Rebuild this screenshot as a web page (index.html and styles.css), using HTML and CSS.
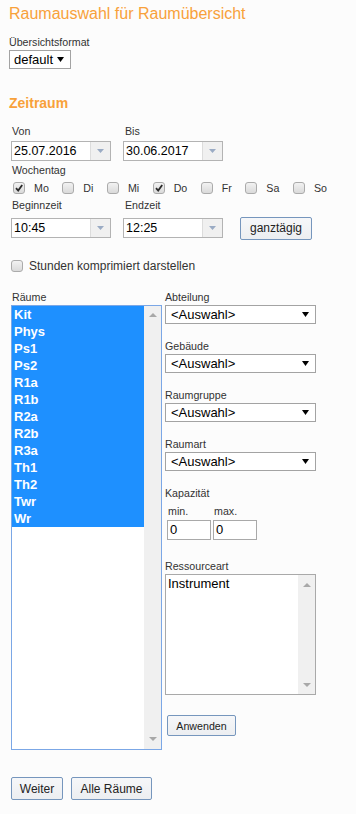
FILE: index.html
```html
<!DOCTYPE html>
<html lang="de">
<head>
  <meta charset="UTF-8" />
  <meta name="viewport" content="width=device-width, initial-scale=1" />
  <title>Raumauswahl für Raumübersicht</title>
  <link rel="stylesheet" href="styles.css">
</head>
<body>

<h1>Raumauswahl für Raumübersicht</h1>

<div class="format">
  <label class="lbl">Übersichtsformat</label>
  <div class="select select-format">
    <span>default</span>
    <svg class="caret" width="7" height="5" viewBox="0 0 7 5"><polygon points="0,0 7,0 3.5,5" fill="#000"/></svg>
  </div>
</div>

<h2>Zeitraum</h2>

<div class="zeitraum">
  <div class="cols">
    <label class="lbl col">Von</label>
    <label class="lbl col">Bis</label>
  </div>
  <div class="cols inputs">
    <div class="col">
      <div class="combo"><span class="val">25.07.2016</span><span class="drop"><svg width="7" height="4" viewBox="0 0 7 4"><polygon points="0,0 7,0 3.5,4" fill="#9aabc4"/></svg></span></div>
    </div>
    <div class="col">
      <div class="combo"><span class="val">30.06.2017</span><span class="drop"><svg width="7" height="4" viewBox="0 0 7 4"><polygon points="0,0 7,0 3.5,4" fill="#9aabc4"/></svg></span></div>
    </div>
  </div>

  <label class="lbl wochentag">Wochentag</label>
  <div class="days">
    <span class="day"><span class="cb"><svg width="10" height="10" viewBox="0 0 10 10"><path d="M2 5.2 L4.2 7.6 L8.2 2" fill="none" stroke="#2b2b2b" stroke-width="1.8"/></svg></span>Mo</span>
    <span class="day"><span class="cb"></span>Di</span>
    <span class="day"><span class="cb"></span>Mi</span>
    <span class="day"><span class="cb"><svg width="10" height="10" viewBox="0 0 10 10"><path d="M2 5.2 L4.2 7.6 L8.2 2" fill="none" stroke="#2b2b2b" stroke-width="1.8"/></svg></span>Do</span>
    <span class="day"><span class="cb"></span>Fr</span>
    <span class="day"><span class="cb"></span>Sa</span>
    <span class="day"><span class="cb"></span>So</span>
  </div>

  <div class="cols zeiten">
    <label class="lbl col">Beginnzeit</label>
    <label class="lbl col">Endzeit</label>
  </div>
  <div class="cols times">
    <div class="col">
      <div class="combo"><span class="val">10:45</span><span class="drop"><svg width="7" height="4" viewBox="0 0 7 4"><polygon points="0,0 7,0 3.5,4" fill="#9aabc4"/></svg></span></div>
    </div>
    <div class="col">
      <div class="combo"><span class="val">12:25</span><span class="drop"><svg width="7" height="4" viewBox="0 0 7 4"><polygon points="0,0 7,0 3.5,4" fill="#9aabc4"/></svg></span></div>
    </div>
    <button type="button" class="btn btn-ganz">ganztägig</button>
  </div>
</div>

<div class="kompakt">
  <span class="cb"></span>
  <span>Stunden komprimiert darstellen</span>
</div>

<div class="auswahl">
  <div class="left">
    <label class="lbl">Räume</label>
    <div class="listbox rooms">
      <div class="items">
        <div class="opt sel">Kit</div>
        <div class="opt sel">Phys</div>
        <div class="opt sel">Ps1</div>
        <div class="opt sel">Ps2</div>
        <div class="opt sel">R1a</div>
        <div class="opt sel">R1b</div>
        <div class="opt sel">R2a</div>
        <div class="opt sel">R2b</div>
        <div class="opt sel">R3a</div>
        <div class="opt sel">Th1</div>
        <div class="opt sel">Th2</div>
        <div class="opt sel">Twr</div>
        <div class="opt sel">Wr</div>
      </div>
      <div class="scroll">
        <svg width="8" height="4" viewBox="0 0 8 4"><polygon points="0,4 8,4 4,0" fill="#a8a8a8"/></svg>
        <svg width="8" height="4" viewBox="0 0 8 4"><polygon points="0,0 8,0 4,4" fill="#a8a8a8"/></svg>
      </div>
    </div>
  </div>

  <div class="right">
    <div class="group">
      <label class="lbl">Abteilung</label>
      <div class="select"><span>&lt;Auswahl&gt;</span><svg class="caret" width="7" height="5" viewBox="0 0 7 5"><polygon points="0,0 7,0 3.5,5" fill="#000"/></svg></div>
    </div>
    <div class="group">
      <label class="lbl">Gebäude</label>
      <div class="select"><span>&lt;Auswahl&gt;</span><svg class="caret" width="7" height="5" viewBox="0 0 7 5"><polygon points="0,0 7,0 3.5,5" fill="#000"/></svg></div>
    </div>
    <div class="group">
      <label class="lbl">Raumgruppe</label>
      <div class="select"><span>&lt;Auswahl&gt;</span><svg class="caret" width="7" height="5" viewBox="0 0 7 5"><polygon points="0,0 7,0 3.5,5" fill="#000"/></svg></div>
    </div>
    <div class="group">
      <label class="lbl">Raumart</label>
      <div class="select"><span>&lt;Auswahl&gt;</span><svg class="caret" width="7" height="5" viewBox="0 0 7 5"><polygon points="0,0 7,0 3.5,5" fill="#000"/></svg></div>
    </div>
    <div class="group">
      <label class="lbl">Kapazität</label>
      <div class="kap">
        <div class="kap-col">
          <label class="lbl">min.</label>
          <div class="num">0</div>
        </div>
        <div class="kap-col">
          <label class="lbl">max.</label>
          <div class="num">0</div>
        </div>
      </div>
    </div>
    <div class="group ressource">
      <label class="lbl">Ressourceart</label>
      <div class="listbox res">
        <div class="items">
          <div class="opt">Instrument</div>
        </div>
        <div class="scroll">
          <svg width="8" height="4" viewBox="0 0 8 4"><polygon points="0,4 8,4 4,0" fill="#a8a8a8"/></svg>
          <svg width="8" height="4" viewBox="0 0 8 4"><polygon points="0,0 8,0 4,4" fill="#a8a8a8"/></svg>
        </div>
      </div>
    </div>
    <button type="button" class="btn btn-small">Anwenden</button>
  </div>
</div>

<div class="actions">
  <button type="button" class="btn btn-weiter">Weiter</button>
  <button type="button" class="btn btn-alle">Alle Räume</button>
</div>

</body>
</html>
```

FILE: styles.css
```css
body {
  margin: 0;
  padding: 5px 9px 0;
  background: #fcfcfc;
  font-family: "Liberation Sans", Arial, sans-serif;
  color: #333;
}
h1 {
  margin: 0;
  font-size: 16px;
  line-height: 18px;
  font-weight: normal;
  color: #f8a13a;
}
h2 {
  margin: 26px 0 0;
  font-size: 14px;
  line-height: 16px;
  font-weight: bold;
  color: #f8a13a;
}
.lbl {
  display: block;
  font-size: 10.67px;
  line-height: 13px;
  color: #333;
}
.format {
  margin-top: 13px;
}

/* Auswahllisten */
.select {
  box-sizing: border-box;
  display: flex;
  align-items: center;
  justify-content: space-between;
  height: 19px;
  margin-top: 1px;
  padding: 0 6px 0 5px;
  border: 1px solid #a3a3a3;
  background: #fff;
  font-size: 13px;
  line-height: 16px;
  color: #000;
}
.select-format {
  width: 62px;
  padding-left: 4px;
}
.caret {
  flex: 0 0 auto;
}

/* Zeitraum */
.zeitraum {
  padding-left: 2px;
}
.cols {
  display: flex;
  margin-top: 14px;
}
.cols .lbl {
  padding-left: 1px;
}
.col {
  width: 112px;
  flex: 0 0 112px;
}
.inputs {
  margin-top: 3px;
}
.combo {
  box-sizing: border-box;
  display: flex;
  width: 100px;
  height: 20px;
  border: 1px solid #b3b3b3;
  background: #fff;
}
.combo .val {
  flex: 1;
  padding-left: 2px;
  font-size: 12.5px;
  line-height: 18px;
  color: #000;
}
.combo .drop {
  display: flex;
  align-items: center;
  justify-content: center;
  width: 19px;
  border-left: 1px solid #dcdcdc;
  background: #f0f0f0;
}
.wochentag {
  margin-top: 3px;
  padding-left: 1px;
}
.days {
  display: flex;
  height: 16px;
  margin-top: 3px;
  padding-left: 2px;
  align-items: center;
  font-size: 10.67px;
  color: #333;
}
.day {
  display: flex;
  align-items: center;
  margin-right: 13.5px;
}
.cb {
  box-sizing: border-box;
  display: inline-flex;
  align-items: center;
  justify-content: center;
  width: 12px;
  height: 12px;
  margin-right: 9px;
  border: 1px solid #ababab;
  border-radius: 3px;
  background: linear-gradient(#f2f2f2, #dadada);
}
.zeiten {
  margin-top: 3px;
}
.times {
  margin-top: 5px;
  height: 22px;
  align-items: center;
}

/* Buttons */
.btn {
  box-sizing: border-box;
  height: 23px;
  padding: 0 9px;
  border: 1px solid #7696bd;
  border-radius: 2px;
  background: linear-gradient(#f6f7f9, #eceef1);
  font-family: "Liberation Sans", Arial, sans-serif;
  font-size: 12px;
  color: #222;
  cursor: pointer;
}
.btn-ganz {
  width: 72px;
  margin-left: 5px;
}
.btn-small {
  height: 21px;
  width: 69px;
  margin: 20px 0 0 2px;
  padding: 0;
  font-size: 10.67px;
}

.kompakt {
  display: flex;
  align-items: center;
  height: 16px;
  margin-top: 19px;
  padding-left: 2px;
  font-size: 12px;
  color: #333;
}
.kompakt .cb {
  margin-right: 6px;
}

/* Räume + Filter */
.auswahl {
  display: flex;
  gap: 3px;
  margin-top: 17px;
  padding-left: 2px;
}
.left {
  width: 151px;
}
.left .lbl {
  padding-left: 1px;
}
.right {
  width: 151px;
}
.group + .group {
  margin-top: 16px;
}
.ressource.group {
  margin-top: 20px;
}
.listbox {
  box-sizing: border-box;
  display: flex;
  margin-top: 1px;
  background: #fff;
}
.rooms {
  height: 445px;
  border: 1px solid #7ba7e6;
}
.res {
  height: 121px;
  border: 1px solid #a9a9a9;
}
.items {
  flex: 1;
}
.opt {
  height: 17px;
  padding-left: 2px;
  font-size: 13px;
  line-height: 17px;
  color: #000;
}
.opt.sel {
  background: #1e90ff;
  color: #fff;
  font-weight: bold;
}
.scroll {
  display: flex;
  flex-direction: column;
  justify-content: space-between;
  align-items: center;
  width: 17px;
  padding: 7px 0 8px;
  background: #f0f0f0;
}
.res .scroll {
  padding: 8px 0 7px;
}
.kap {
  display: flex;
  gap: 2px;
  margin-top: 5px;
  padding-left: 2px;
}
.kap .lbl {
  padding-left: 1px;
}
.num {
  box-sizing: border-box;
  width: 44px;
  height: 20px;
  margin-top: 2px;
  padding-left: 2px;
  border: 1px solid #a9a9a9;
  background: #fff;
  font-size: 13px;
  line-height: 18px;
  color: #000;
}

.actions {
  display: flex;
  gap: 8px;
  margin-top: 27px;
  padding-left: 2px;
}
.btn-weiter {
  width: 52px;
  padding: 0;
}
.btn-alle {
  width: 81px;
  padding: 0;
}
```
